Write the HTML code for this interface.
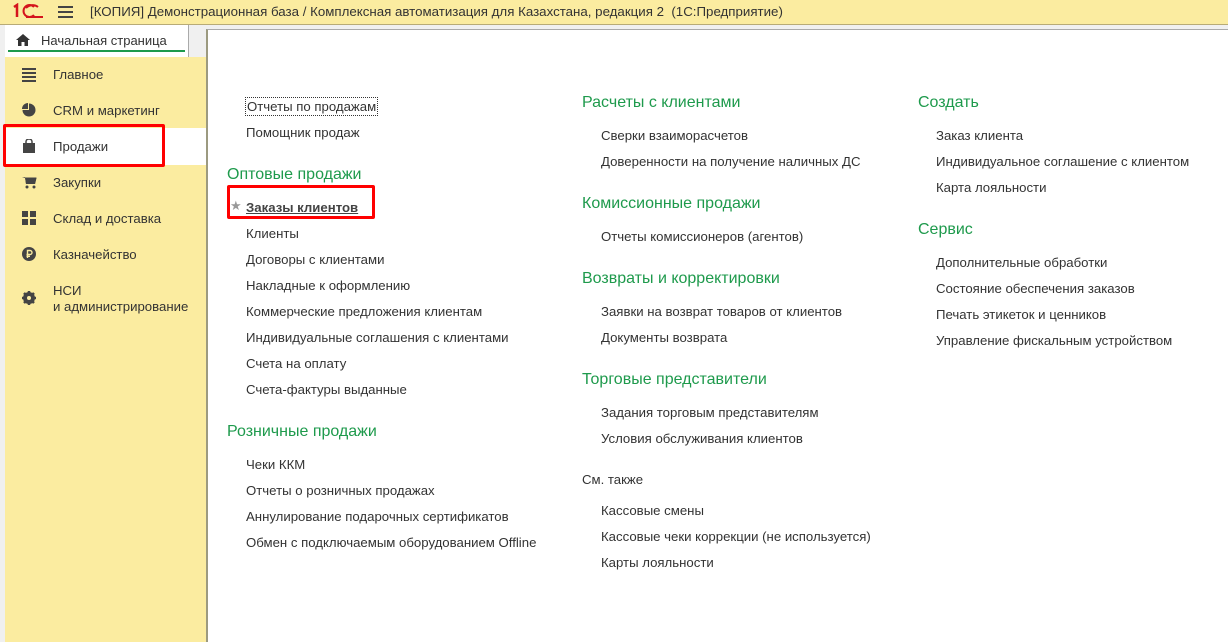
<!DOCTYPE html>
<html><head><meta charset="utf-8"><style>
*{margin:0;padding:0;box-sizing:border-box}
body{width:1228px;height:642px;overflow:hidden;background:#f0f0f0;font-family:"Liberation Sans",Arial,sans-serif;color:#333;position:relative;font-size:13px}
.top{position:absolute;left:0;top:0;width:1228px;height:25px;background:#fbeca0;border-bottom:1px solid #b8ab76}
.top .t{position:absolute;left:90px;top:4px;font-size:13.3px;color:#333}
.tab{position:absolute;left:5px;top:25px;width:184px;height:32px;background:#fff;border-right:1px solid #aaa}
.tab .u{position:absolute;left:3px;top:25px;width:177px;height:2px;background:#1e9a4c}
.tab span{position:absolute;left:36px;top:8px;font-size:13px}
.side{position:absolute;left:0;top:57px;width:206px;height:585px;background:#fbeca0;border-left:5px solid #f0f0f0}
.it{position:absolute;left:53px;font-size:13.2px;color:#333}
.ic{position:absolute;left:22px}
.sel{position:absolute;left:5px;top:128px;width:201px;height:37px;background:#fff}
.red{position:absolute;border:3px solid #f00;border-radius:2px}
.main{position:absolute;left:206px;top:29px;width:1022px;height:613px;background:#fff;border-top:1px solid #aaa;border-left:2px solid #9c9a80}
.l{position:absolute;font-size:13.2px;color:#333;white-space:nowrap}
.h{position:absolute;font-size:16px;color:#1e9a4c;white-space:nowrap}
</style></head><body>
<div class="top">
<svg style="position:absolute;left:12px;top:3px" width="32" height="16" viewBox="0 0 32 16"><path d="M2 4 L5 2 L5 14" stroke="#d4141c" stroke-width="2.5" fill="none"/><path d="M22 4 A6 6 0 1 0 22 12 M26 4 A9 9 0 0 0 14 5 M14 14 H31" stroke="#d4141c" stroke-width="2" fill="none"/></svg>
<div style="position:absolute;left:58px;top:6px;width:15px;height:2px;background:#444;box-shadow:0 5px 0 #444,0 10px 0 #444"></div>
<div class="t">[КОПИЯ] Демонстрационная база / Комплексная автоматизация для Казахстана, редакция 2 &nbsp;(1С:Предприятие)</div>
</div>
<div class="tab"><svg style="position:absolute;left:11px;top:9px" width="14" height="12" viewBox="0 0 14 12"><path d="M7 0 L14 6 H12 V12 H8.5 V8 H5.5 V12 H2 V6 H0Z" fill="#333"/></svg><span>Начальная страница</span><div class="u"></div></div>
<div class="side"></div>
<div class="sel"></div>
<div class="ic" style="top:68px;width:14px;height:2px;background:#444;box-shadow:0 4px 0 #444,0 8px 0 #444,0 12px 0 #444;top:68px"></div>
<div class="it" style="top:67px">Главное</div>
<svg class="ic" style="top:103px" width="14" height="14" viewBox="0 0 14 14"><path d="M7 7 V0.5 A6.5 6.5 0 1 1 0.5 7Z" fill="#444"/><path d="M6 6 H0 A6 6 0 0 1 6 0Z" fill="#444"/></svg>
<div class="it" style="top:103px">CRM и маркетинг</div>
<svg class="ic" style="top:139px" width="14" height="14" viewBox="0 0 14 14"><path d="M1 4 H13 V14 H1Z" fill="#444"/><path d="M4 5 V2.5 A3 2.5 0 0 1 10 2.5 V5" stroke="#444" stroke-width="1.5" fill="none"/></svg>
<div class="it" style="top:139px">Продажи</div>
<svg class="ic" style="top:176px" width="15" height="13" viewBox="0 0 15 13"><path d="M0 1 H3 L4 8 H13 L14.5 2 H3.5" fill="#444"/><path d="M3 1.5 H14.5 L13 8 H4Z" fill="#444"/><circle cx="5" cy="11" r="1.5" fill="#444"/><circle cx="12" cy="11" r="1.5" fill="#444"/></svg>
<div class="it" style="top:175px">Закупки</div>
<svg class="ic" style="top:211px" width="14" height="14" viewBox="0 0 14 14"><path d="M0 0H6V6H0ZM8 0H14V6H8ZM0 8H6V14H0ZM8 8H14V14H8Z" fill="#444"/></svg>
<div class="it" style="top:211px">Склад и доставка</div>
<svg class="ic" style="top:247px" width="14" height="14" viewBox="0 0 14 14"><circle cx="7" cy="7" r="7" fill="#444"/><path d="M5.5 11V3.5H8a2 2 0 0 1 0 4H4.5M4.5 9.3H8" stroke="#fbeca0" stroke-width="1.4" fill="none"/></svg>
<div class="it" style="top:247px">Казначейство</div>
<svg class="ic" style="top:291px" width="14" height="14" viewBox="0 0 14 14"><circle cx="7" cy="7" r="4.5" fill="none" stroke="#444" stroke-width="3"/><path d="M7 0V14M0 7H14M2 2L12 12M12 2L2 12" stroke="#444" stroke-width="2.5"/><circle cx="7" cy="7" r="2" fill="#fbeca0"/></svg>
<div class="it" style="top:283px;line-height:16px">НСИ<br>и администрирование</div>
<div class="red" style="left:3px;top:124px;width:162px;height:43px"></div>
<div class="main"></div>
<div class="l" style="left:245px;top:97px;border:1px dotted #333;padding:1px 1px">Отчеты по продажам</div>
<div class="l" style="left:246px;top:125px">Помощник продаж</div>
<div class="h" style="left:227px;top:166px">Оптовые продажи</div>
<div class="l" style="left:230px;top:198px;color:#999">★</div>
<div class="l" style="left:246px;top:200px;font-weight:bold;text-decoration:underline;color:#444">Заказы клиентов</div>
<div class="red" style="left:227px;top:185px;width:148px;height:34px"></div>
<div class="l" style="left:246px;top:226px">Клиенты</div>
<div class="l" style="left:246px;top:252px">Договоры с клиентами</div>
<div class="l" style="left:246px;top:278px">Накладные к оформлению</div>
<div class="l" style="left:246px;top:304px">Коммерческие предложения клиентам</div>
<div class="l" style="left:246px;top:330px">Индивидуальные соглашения с клиентами</div>
<div class="l" style="left:246px;top:356px">Счета на оплату</div>
<div class="l" style="left:246px;top:382px">Счета-фактуры выданные</div>
<div class="h" style="left:227px;top:423px">Розничные продажи</div>
<div class="l" style="left:246px;top:457px">Чеки ККМ</div>
<div class="l" style="left:246px;top:483px">Отчеты о розничных продажах</div>
<div class="l" style="left:246px;top:509px">Аннулирование подарочных сертификатов</div>
<div class="l" style="left:246px;top:535px">Обмен с подключаемым оборудованием Offline</div>

<div class="h" style="left:582px;top:94px">Расчеты с клиентами</div>
<div class="l" style="left:601px;top:128px">Сверки взаиморасчетов</div>
<div class="l" style="left:601px;top:154px">Доверенности на получение наличных ДС</div>
<div class="h" style="left:582px;top:195px">Комиссионные продажи</div>
<div class="l" style="left:601px;top:229px">Отчеты комиссионеров (агентов)</div>
<div class="h" style="left:582px;top:270px">Возвраты и корректировки</div>
<div class="l" style="left:601px;top:304px">Заявки на возврат товаров от клиентов</div>
<div class="l" style="left:601px;top:330px">Документы возврата</div>
<div class="h" style="left:582px;top:371px">Торговые представители</div>
<div class="l" style="left:601px;top:405px">Задания торговым представителям</div>
<div class="l" style="left:601px;top:431px">Условия обслуживания клиентов</div>
<div class="l" style="left:582px;top:472px">См. также</div>
<div class="l" style="left:601px;top:503px">Кассовые смены</div>
<div class="l" style="left:601px;top:529px">Кассовые чеки коррекции (не используется)</div>
<div class="l" style="left:601px;top:555px">Карты лояльности</div>

<div class="h" style="left:918px;top:94px">Создать</div>
<div class="l" style="left:936px;top:128px">Заказ клиента</div>
<div class="l" style="left:936px;top:154px">Индивидуальное соглашение с клиентом</div>
<div class="l" style="left:936px;top:180px">Карта лояльности</div>
<div class="h" style="left:918px;top:221px">Сервис</div>
<div class="l" style="left:936px;top:255px">Дополнительные обработки</div>
<div class="l" style="left:936px;top:281px">Состояние обеспечения заказов</div>
<div class="l" style="left:936px;top:307px">Печать этикеток и ценников</div>
<div class="l" style="left:936px;top:333px">Управление фискальным устройством</div>
</body></html>
